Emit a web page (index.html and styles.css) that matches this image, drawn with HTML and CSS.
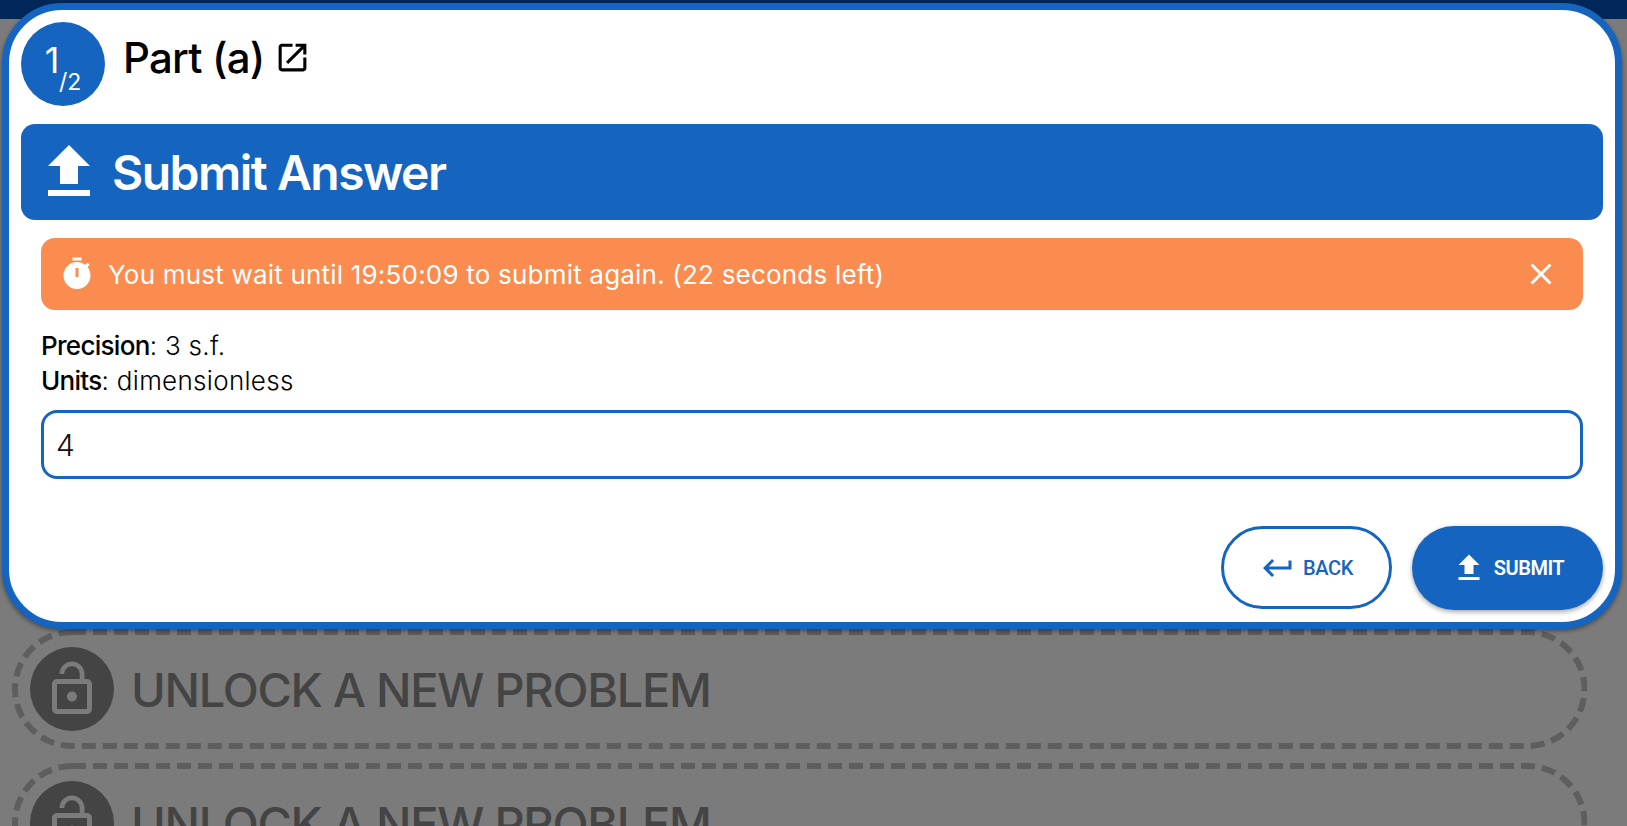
FILE: index.html
```html
<!DOCTYPE html>
<html lang="en">
<head>
    <meta charset="UTF-8">
    <meta name="viewport" content="width=device-width, initial-scale=1.0">
    <title>Submit Answer</title>
    <link rel="stylesheet" href="styles.css">
</head>
<body>
    <div class="top-bar"></div>

    <div class="problem-list">
        <div class="unlock-box">
            <svg class="unlock-dash"><rect/></svg>
            <div class="unlock-circle">
                <svg class="icon-lock" viewBox="0 0 24 24"><path d="M12 17c1.1 0 2-.9 2-2s-.9-2-2-2-2 .9-2 2 .9 2 2 2zm6-9h-1V6c0-2.76-2.24-5-5-5S7 3.24 7 6h1.9c0-1.71 1.39-3.1 3.1-3.1 1.71 0 3.1 1.39 3.1 3.1v2H6c-1.1 0-2 .9-2 2v10c0 1.1.9 2 2 2h12c1.1 0 2-.9 2-2V10c0-1.1-.9-2-2-2zm0 12H6V10h12v10z"/></svg>
            </div>
            <div class="unlock-text">UNLOCK A NEW PROBLEM</div>
        </div>
        <div class="unlock-box">
            <svg class="unlock-dash"><rect/></svg>
            <div class="unlock-circle">
                <svg class="icon-lock" viewBox="0 0 24 24"><path d="M12 17c1.1 0 2-.9 2-2s-.9-2-2-2-2 .9-2 2 .9 2 2 2zm6-9h-1V6c0-2.76-2.24-5-5-5S7 3.24 7 6h1.9c0-1.71 1.39-3.1 3.1-3.1 1.71 0 3.1 1.39 3.1 3.1v2H6c-1.1 0-2 .9-2 2v10c0 1.1.9 2 2 2h12c1.1 0 2-.9 2-2V10c0-1.1-.9-2-2-2zm0 12H6V10h12v10z"/></svg>
            </div>
            <div class="unlock-text">UNLOCK A NEW PROBLEM</div>
        </div>
    </div>

    <div class="modal">
        <div class="part-header">
            <div class="part-circle">
                <span class="part-num">1</span><span class="part-total">/2</span>
            </div>
            <h2 class="part-title">Part (a)</h2>
            <svg class="icon-open" viewBox="0 0 24 24"><path d="M19 19H5V5h7V3H5c-1.11 0-2 .9-2 2v14c0 1.1.89 2 2 2h14c1.1 0 2-.9 2-2v-7h-2v7zM14 3v2h3.59l-9.83 9.83 1.41 1.41L19 6.41V10h2V3h-7z"/></svg>
        </div>

        <div class="submit-banner">
            <svg class="icon-upload-big" viewBox="0 0 24 24"><path d="M9 16h6v-6h4l-7-7-7 7h4zm-4 2h14v2H5z"/></svg>
            <h1>Submit Answer</h1>
        </div>

        <div class="form-area">
            <div class="alert">
                <svg class="icon-alert" viewBox="0 0 24 24"><path d="M9 1h6v2H9zm10.03 6.39l1.42-1.42c-.43-.51-.9-.99-1.41-1.41l-1.42 1.42C16.07 4.74 14.12 4 12 4c-4.97 0-9 4.03-9 9s4.02 9 9 9 9-4.03 9-9c0-2.12-.74-4.07-1.97-5.61zM13 14h-2V8h2v6z"/></svg>
                <span class="alert-text">You must wait until 19:50:09 to submit again. (22 seconds left)</span>
                <svg class="icon-alert" viewBox="0 0 24 24"><path d="M19 6.41L17.59 5 12 10.59 6.41 5 5 6.41 10.59 12 5 17.59 6.41 19 12 13.41 17.59 19 19 17.59 13.41 12z"/></svg>
            </div>
            <div class="meta">
                <div><b>Precision</b>: 3 s.f.</div>
                <div><b>Units</b>: dimensionless</div>
            </div>
            <input class="answer-input" type="text" value="4">
        </div>

        <div class="actions">
            <button class="btn btn-back">
                <svg class="icon-btn" viewBox="0 0 24 24"><path d="M19 7v4H5.83l3.58-3.59L8 6l-6 6 6 6 1.41-1.41L5.83 13H21V7z"/></svg>
                BACK
            </button>
            <button class="btn btn-submit">
                <svg class="icon-btn" viewBox="0 0 24 24"><path d="M9 16h6v-6h4l-7-7-7 7h4zm-4 2h14v2H5z"/></svg>
                SUBMIT
            </button>
        </div>
    </div>
</body>
</html>
```

FILE: styles.css
```css
html, body {
    height: 100%;
}

body {
    margin: 0;
    overflow: hidden;
    background-color: #7b7b7b;
    font-family: 'Inter', 'Roboto', sans-serif;
    color: #000;
}

.top-bar {
    height: 19px;
    background-color: #012858;
}

/* greyed page behind the modal */
.problem-list {
    display: flex;
    flex-direction: column;
    gap: 14px;
    padding: 610px 40px 0 11.5px;
}

.unlock-box {
    position: relative;
    display: flex;
    align-items: center;
    gap: 17px;
    height: 120px;
    box-sizing: border-box;
    padding: 0 18.5px;
    flex-shrink: 0;
}

/* svg instead of a css border, the dashes need to be 14/7 */
.unlock-dash {
    position: absolute;
    top: 0;
    left: 0;
    width: 100%;
    height: 100%;
}

.unlock-dash rect {
    x: 3px;
    y: 3px;
    width: calc(100% - 6px);
    height: calc(100% - 6px);
    rx: 57px;
    fill: none;
    stroke: #5e5e5e;
    stroke-width: 6;
    stroke-dasharray: 14 7;
}

.unlock-circle {
    width: 84px;
    height: 84px;
    border-radius: 50%;
    background-color: #444;
    display: flex;
    justify-content: center;
    align-items: center;
}

.icon-lock {
    width: 60px;
    height: 60px;
    fill: #7b7b7b;
}

.unlock-text {
    font-size: 47px;
    font-weight: 500;
    letter-spacing: -1.3px;
    color: #444;
    white-space: nowrap;
}

.modal {
    position: absolute;
    top: 3px;
    left: 2px;
    width: 1620px;
    height: 626px;
    box-sizing: border-box;
    padding: 12px;
    background-color: white;
    border: 7px solid #1565c0;
    border-radius: 60px;
    box-shadow: 0 2px 4px rgba(0, 0, 0, 0.4);
}

.part-header {
    display: flex;
    align-items: flex-start;
    height: 84px;
}

.part-circle {
    width: 84px;
    height: 84px;
    border-radius: 50%;
    background-color: #1565c0;
    color: white;
    display: flex;
    justify-content: center;
    position: relative;
    flex-shrink: 0;
}

.part-num {
    font-size: 36px;
    font-weight: 400;
    line-height: 76px;
    margin-right: 22px;
}

.part-total {
    position: absolute;
    left: 38px;
    top: 46px;
    font-size: 23px;
    font-weight: 400;
}

.part-title {
    margin: 12px 0 0 18px;
    font-size: 42px;
    line-height: 48px;
    font-weight: 500;
    letter-spacing: -0.8px;
}

.icon-open {
    width: 37px;
    height: 37px;
    margin: 17px 0 0 10px;
}

.submit-banner {
    display: flex;
    align-items: center;
    gap: 7px;
    height: 96px;
    margin-top: 18px;
    padding-left: 12px;
    background-color: #1565c0;
    border-radius: 14px;
    color: white;
}

.submit-banner h1 {
    margin: 0;
    font-size: 48px;
    font-weight: 600;
    letter-spacing: -1.5px;
}

.icon-upload-big {
    width: 72px;
    height: 72px;
    fill: white;
}

.form-area {
    padding: 18px 20px 0;
}

.alert {
    display: flex;
    align-items: center;
    height: 72px;
    padding: 0 24px 0 18px;
    background-color: #fb8c50;
    border-radius: 14px;
    color: white;
    font-size: 26px;
}

.icon-alert {
    width: 36px;
    height: 36px;
    fill: white;
    flex-shrink: 0;
}

.alert-text {
    flex: 1;
    margin-left: 13px;
    letter-spacing: 0.2px;
}

.meta {
    margin-top: 18px;
    font-size: 26px;
    line-height: 35px;
    font-weight: 300;
    letter-spacing: 0.3px;
}

.meta b {
    font-weight: 500;
    letter-spacing: -0.7px;
}

.answer-input {
    display: block;
    width: 100%;
    height: 69px;
    box-sizing: border-box;
    margin-top: 12px;
    padding: 0 12px;
    border: 3px solid #1565c0;
    border-radius: 16px;
    font-family: inherit;
    font-size: 30px;
    font-weight: 300;
    color: #111;
    outline: none;
}

.actions {
    display: flex;
    justify-content: flex-end;
    gap: 20px;
    margin-top: 47px;
}

.btn {
    display: flex;
    align-items: center;
    justify-content: center;
    gap: 7px;
    height: 83px;
    box-sizing: border-box;
    border-radius: 42px;
    font-family: 'Roboto', sans-serif;
    font-size: 20px;
    font-weight: 500;
    letter-spacing: -0.3px;
}

.btn-back {
    width: 171px;
    background-color: white;
    border: 3px solid #1565c0;
    color: #1565c0;
}

.btn-submit {
    width: 191px;
    height: 84px;
    background-color: #1565c0;
    border: none;
    color: white;
    font-weight: 600;
    letter-spacing: -0.5px;
    box-shadow: 0 2px 5px rgba(0, 0, 0, 0.35);
}

.icon-btn {
    width: 36px;
    height: 36px;
    fill: currentColor;
}
```
